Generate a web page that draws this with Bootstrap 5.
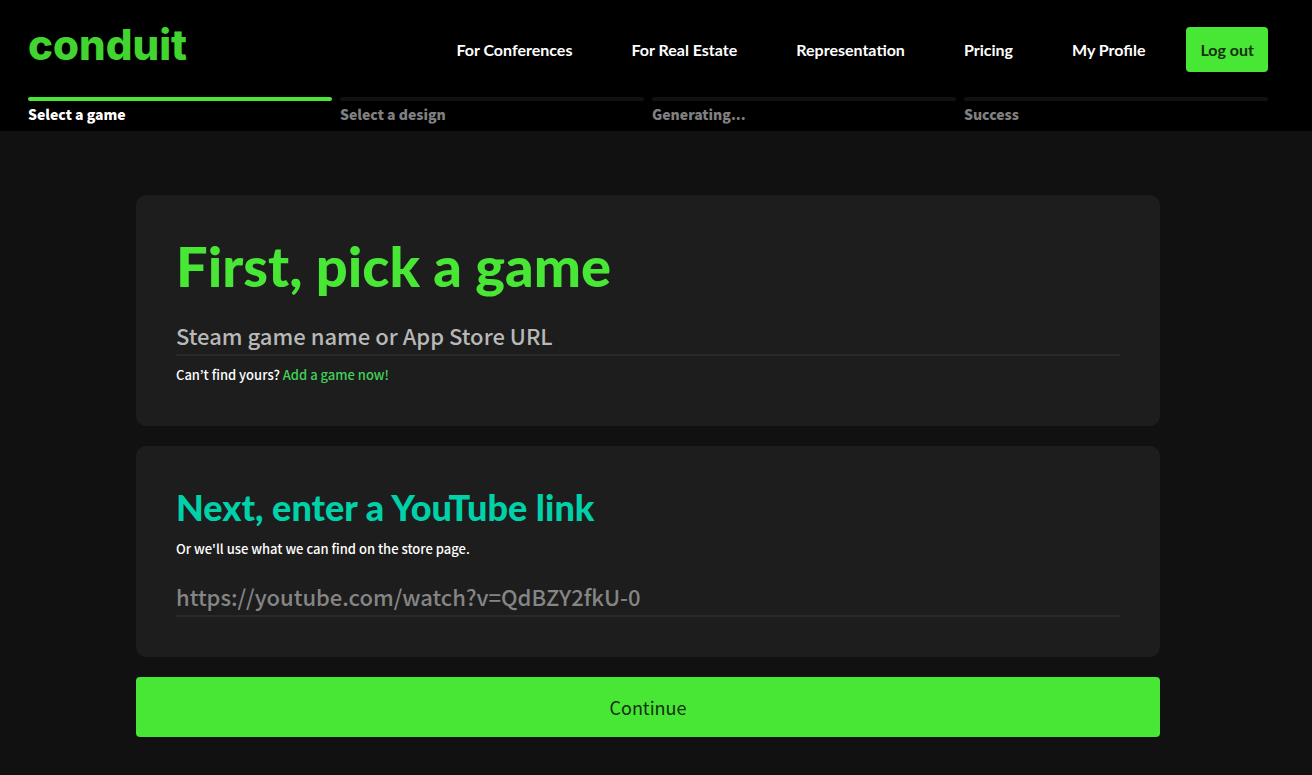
<!DOCTYPE html>
<html lang="en">
<head>
<meta charset="utf-8">
<meta name="viewport" content="width=device-width, initial-scale=1">
<title>Conduit – Select a game</title>
<link href="https://cdn.jsdelivr.net/npm/bootstrap@5.3.0/dist/css/bootstrap.min.css" rel="stylesheet">
<style>
:root{--green:#48e635;--teal:#00d1a9;--display:Lato,sans-serif;--text:"Noto Sans CJK KR",sans-serif}
body{background:#111;color:#fff;font-family:var(--text);font-size:13px;font-weight:500;line-height:22px}
.site-header{background:#000;padding:27px 44px 4px 28px}
.brand{font:800 42px/36px Inter,sans-serif;color:#42d530}
.site-nav .nav-link{font:700 16px/20px var(--display);color:#fff;padding:8px 0}
.site-nav{column-gap:59px}
.btn-logout{--bs-btn-bg:var(--green);--bs-btn-color:#14300f;--bs-btn-hover-bg:#5cf04a;--bs-btn-padding-x:14px;--bs-btn-border-width:0px;--bs-btn-border-radius:4px;font:700 16px/20px var(--display);height:45px;margin-left:41px}
.steps{gap:8px;margin-top:25px}
.step-item{color:#808080;font-weight:900;font-size:14px;line-height:26px}
.step-item::before{content:"";display:block;height:4px;border-radius:2px;background:#111}
.step-item.active{color:#fff}
.step-item.active::before{background:var(--green)}
.page-main{padding:64px 28px 34px 12px}
.form-column{max-width:1024px;gap:20px}
.panel{background:#1d1d1d;border-radius:10px;padding:40px}
.title-lg{font:900 56px/62px var(--display);color:var(--green);margin-bottom:18px}
.title-md{font:900 36px/42px var(--display);color:var(--teal);margin-bottom:10px}
.line-input{background:transparent;border:0;border-bottom:2px solid #2a2a2a;border-radius:0;padding:0;height:41px;font-size:22px;font-weight:500;line-height:36px;color:#fff}
.line-input:focus{background:transparent;color:#fff;box-shadow:none;border-color:var(--green)}
.line-input::placeholder{color:#858585;opacity:1}
.line-input.bright::placeholder{color:#b8b8b8}
.panel a{color:#42d05a}
.btn-continue{--bs-btn-bg:var(--green);--bs-btn-color:#14300f;--bs-btn-hover-bg:#5cf04a;--bs-btn-border-width:0px;--bs-btn-border-radius:4px;height:60px;font-size:18px}
</style>
</head>
<body>
<header class="site-header">
  <nav class="d-flex align-items-start justify-content-between" aria-label="Main">
    <a class="brand text-decoration-none" href="#">conduit</a>
    <div class="d-flex align-items-center">
      <div class="nav site-nav">
        <a class="nav-link" href="#">For Conferences</a>
        <a class="nav-link" href="#">For Real Estate</a>
        <a class="nav-link" href="#">Representation</a>
        <a class="nav-link" href="#">Pricing</a>
        <a class="nav-link" href="#">My Profile</a>
      </div>
      <button class="btn btn-logout" type="button">Log out</button>
    </div>
  </nav>
  <ol class="steps list-unstyled d-flex mb-0">
    <li class="step-item active flex-fill w-100" aria-current="step">Select a game</li>
    <li class="step-item flex-fill w-100">Select a design</li>
    <li class="step-item flex-fill w-100">Generating...</li>
    <li class="step-item flex-fill w-100">Success</li>
  </ol>
</header>
<main class="page-main">
  <form class="form-column mx-auto d-flex flex-column">
    <section class="panel">
      <h1 class="title-lg"><label for="game">First, pick a game</label></h1>
      <input class="form-control line-input bright" id="game" type="text" placeholder="Steam game name or App Store URL">
      <p class="mt-2 mb-0">Can’t find yours? <a class="text-decoration-none" href="#">Add a game now!</a></p>
    </section>
    <section class="panel">
      <h2 class="title-md"><label for="video">Next, enter a YouTube link</label></h2>
      <p class="mb-3">Or we'll use what we can find on the store page.</p>
      <input class="form-control line-input" id="video" type="url" placeholder="https://youtube.com/watch?v=QdBZY2fkU-0">
    </section>
    <button class="btn btn-continue w-100" type="submit">Continue</button>
  </form>
</main>
<script src="https://cdn.jsdelivr.net/npm/bootstrap@5.3.0/dist/js/bootstrap.bundle.min.js"></script>
</body>
</html>
